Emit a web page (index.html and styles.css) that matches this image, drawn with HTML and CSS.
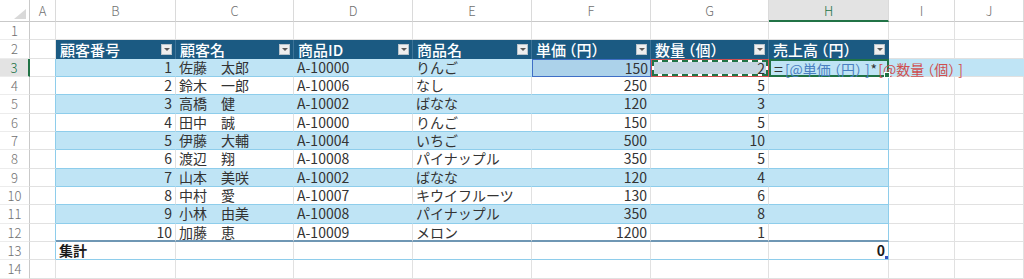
FILE: index.html
```html
<!DOCTYPE html>
<html lang="ja">
<head>
<meta charset="utf-8">
<title>売上表</title>
<link rel="stylesheet" href="styles.css">
</head>
<body>
<div class="sheet">
  <div class="corner"><svg width="12" height="10" viewBox="0 0 12 10"><polygon points="12,0 12,10 0,10" fill="#d9d9d9"/></svg></div>
  <div class="ch">A</div><div class="ch">B</div><div class="ch">C</div><div class="ch">D</div><div class="ch">E</div><div class="ch">F</div><div class="ch">G</div><div class="ch act">H</div><div class="ch">I</div><div class="ch">J</div>

  <div class="rh">1</div>
  <div class="x"></div><div class="x"></div><div class="x"></div><div class="x"></div><div class="x"></div><div class="x"></div><div class="x"></div><div class="x"></div><div class="x"></div><div class="x"></div>

  <div class="rh">2</div>
  <div class="x"></div>
  <div class="hd"><span>顧客番号</span><span class="flt"></span></div>
  <div class="hd"><span>顧客名</span><span class="flt"></span></div>
  <div class="hd"><span>商品ID</span><span class="flt"></span></div>
  <div class="hd"><span>商品名</span><span class="flt"></span></div>
  <div class="hd"><span>単価<span class="pl">（</span>円<span class="pr">）</span></span><span class="flt"></span></div>
  <div class="hd"><span>数量<span class="pl">（</span>個<span class="pr">）</span></span><span class="flt"></span></div>
  <div class="hd hd-last"><span>売上高<span class="pl">（</span>円<span class="pr">）</span></span><span class="flt"></span></div>
  <div class="x"></div><div class="x"></div>

  <div class="rh act">3</div>
  <div class="x ae"></div>
  <div class="x bl n">1</div><div class="x bl">佐藤　太郎</div><div class="x bl">A-10000</div><div class="x bl">りんご</div>
  <div class="x bl n refb">150</div>
  <div class="x bl refr"><div class="ants"><span class="antin">2</span></div></div>
  <div class="x bl last edit"><span class="eq">=</span><span class="fb">[@単価<span class="pl">（</span>円<span class="pr">）</span>]</span><span class="ast">*</span><span class="fr">[@数量<span class="pl">（</span>個<span class="pr">）</span>]</span></div>
  <div class="x ed"></div><div class="x ed"></div>

  <div class="rh">4</div>
  <div class="x ae"></div>
  <div class="x wh n">2</div><div class="x wh">鈴木　一郎</div><div class="x wh">A-10006</div><div class="x wh">なし</div><div class="x wh n">250</div><div class="x wh n">5</div><div class="x wh last"></div>
  <div class="x"></div><div class="x"></div>

  <div class="rh">5</div>
  <div class="x ae"></div>
  <div class="x bl n">3</div><div class="x bl">高橋　健</div><div class="x bl">A-10002</div><div class="x bl">ばなな</div><div class="x bl n">120</div><div class="x bl n">3</div><div class="x bl last"></div>
  <div class="x"></div><div class="x"></div>

  <div class="rh">6</div>
  <div class="x ae"></div>
  <div class="x wh n">4</div><div class="x wh">田中　誠</div><div class="x wh">A-10000</div><div class="x wh">りんご</div><div class="x wh n">150</div><div class="x wh n">5</div><div class="x wh last"></div>
  <div class="x"></div><div class="x"></div>

  <div class="rh">7</div>
  <div class="x ae"></div>
  <div class="x bl n">5</div><div class="x bl">伊藤　大輔</div><div class="x bl">A-10004</div><div class="x bl">いちご</div><div class="x bl n">500</div><div class="x bl n">10</div><div class="x bl last"></div>
  <div class="x"></div><div class="x"></div>

  <div class="rh">8</div>
  <div class="x ae"></div>
  <div class="x wh n">6</div><div class="x wh">渡辺　翔</div><div class="x wh">A-10008</div><div class="x wh">パイナップル</div><div class="x wh n">350</div><div class="x wh n">5</div><div class="x wh last"></div>
  <div class="x"></div><div class="x"></div>

  <div class="rh">9</div>
  <div class="x ae"></div>
  <div class="x bl n">7</div><div class="x bl">山本　美咲</div><div class="x bl">A-10002</div><div class="x bl">ばなな</div><div class="x bl n">120</div><div class="x bl n">4</div><div class="x bl last"></div>
  <div class="x"></div><div class="x"></div>

  <div class="rh">10</div>
  <div class="x ae"></div>
  <div class="x wh n">8</div><div class="x wh">中村　愛</div><div class="x wh">A-10007</div><div class="x wh">キウイフルーツ</div><div class="x wh n">130</div><div class="x wh n">6</div><div class="x wh last"></div>
  <div class="x"></div><div class="x"></div>

  <div class="rh">11</div>
  <div class="x ae"></div>
  <div class="x bl n">9</div><div class="x bl">小林　由美</div><div class="x bl">A-10008</div><div class="x bl">パイナップル</div><div class="x bl n">350</div><div class="x bl n">8</div><div class="x bl last"></div>
  <div class="x"></div><div class="x"></div>

  <div class="rh">12</div>
  <div class="x ae"></div>
  <div class="x wh r12 n">10</div><div class="x wh r12">加藤　恵</div><div class="x wh r12">A-10009</div><div class="x wh r12">メロン</div><div class="x wh r12 n">1200</div><div class="x wh r12 n">1</div><div class="x wh r12 last"></div>
  <div class="x"></div><div class="x"></div>

  <div class="rh">13</div>
  <div class="x ae"></div>
  <div class="x tot">集計</div><div class="x tot"></div><div class="x tot"></div><div class="x tot"></div><div class="x tot"></div><div class="x tot"></div><div class="x tot n last rsz">0</div>
  <div class="x"></div><div class="x"></div>

  <div class="rh">14</div>
  <div class="x"></div><div class="x"></div><div class="x"></div><div class="x"></div><div class="x"></div><div class="x"></div><div class="x"></div><div class="x"></div><div class="x"></div><div class="x"></div>
</div>
</body>
</html>
```
FILE: styles.css
```css
html, body {
  margin: 0;
  padding: 0;
  background: #ffffff;
}

body {
  font-family: "Noto Sans CJK JP", "Noto Sans", sans-serif;
  overflow: hidden;
  text-spacing-trim: space-all;
}

.sheet {
  display: grid;
  grid-template-columns: 30px 26px 120px 118px 119px 119px 119px 118px 120px 66px 69px;
  grid-template-rows: 22px repeat(14, 18.33px);
  width: 1024px;
}

.corner {
  box-sizing: border-box;
  border-right: 1px solid #c9c9c9;
  border-bottom: 1px solid #c9c9c9;
  display: flex;
  align-items: flex-end;
  justify-content: flex-end;
  padding: 0 3px 2px 0;
}

.corner svg {
  display: block;
}

.ch {
  box-sizing: border-box;
  border-right: 1px solid #dadada;
  border-bottom: 1px solid #c9c9c9;
  color: #707070;
  font-size: 13px;
  line-height: 22px;
  text-align: center;
  font-weight: 300;
}

.ch.act {
  background: #e3e3e3;
  color: #217346;
  border-bottom: 2px solid #217346;
}

.rh {
  box-sizing: border-box;
  border-right: 1px solid #c9c9c9;
  border-bottom: 1px solid #ececec;
  color: #707070;
  font-size: 13px;
  line-height: 17px;
  text-align: center;
  font-weight: 300;
}

.rh.act {
  background: #e3e3e3;
  color: #217346;
  border-right: 2px solid #217346;
}

.x {
  box-sizing: border-box;
  border-right: 1px solid #e1e1e1;
  border-bottom: 1px solid #e1e1e1;
  font-size: 14px;
  line-height: 17px;
  padding: 0 3px;
  white-space: nowrap;
  color: #333333;
}

.n {
  text-align: right;
}

.hd {
  box-sizing: border-box;
  background: #1b5a82;
  color: #ffffff;
  font-size: 15px;
  font-weight: 500;
  line-height: 17px;
  display: flex;
  align-items: center;
  justify-content: space-between;
  padding: 0 3px 0 4px;
  border-right: 1px solid #3d7499;
  white-space: nowrap;
}

.hd-last {
  border-right-color: #1b5a82;
}

.pl {
  font-feature-settings: "halt";
  padding-left: 3px;
}

.pr {
  font-feature-settings: "halt";
  padding-right: 3px;
}

.flt {
  width: 11px;
  height: 11px;
  box-sizing: border-box;
  background: #efefef;
  border: 1px solid #b9c4cc;
  display: flex;
  align-items: center;
  justify-content: center;
  flex: none;
}

.flt::after {
  content: "";
  border-left: 3px solid transparent;
  border-right: 3px solid transparent;
  border-top: 3px solid #5a5a5a;
}

.ae {
  border-right-color: #8ecdeb;
}

.bl {
  background: #bfe4f5;
  border-right-color: #bfe4f5;
  border-bottom-color: #8ecdeb;
}

.wh {
  border-bottom-color: #8ecdeb;
}

.last {
  border-right-color: #8ecdeb;
}

.r12 {
  border-bottom: 2px solid #6f97b4;
}

.tot {
  font-weight: bold;
  border-bottom-color: #8ecdeb;
  color: #1a1a1a;
}

.rsz {
  position: relative;
}

.rsz::after {
  content: "";
  position: absolute;
  right: 0;
  bottom: 0;
  width: 3px;
  height: 3px;
  background: #3452c0;
}

.refb {
  background: #acd2ea;
  border: 1px solid #3f6fc6;
  padding-right: 2px;
}

.refr {
  background: #c5d5e1;
  border: 1px solid #d24f4f;
  padding: 0;
}

.ants {
  box-sizing: border-box;
  height: 100%;
  border: 2px dashed #217346;
  background: #ffffff;
}

.antin {
  display: block;
  height: 100%;
  background: #c5d5e1;
  text-align: right;
  line-height: 13px;
  padding-right: 1px;
}

.edit {
  position: relative;
  z-index: 2;
  border: 2px solid #217346;
  padding: 0 2px;
  line-height: 15px;
}

.edit::after {
  content: "";
  position: absolute;
  right: -3px;
  bottom: -3px;
  width: 4px;
  height: 4px;
  background: #217346;
  border: 1px solid #ffffff;
}

.eq {
  font-size: 16px;
  padding: 0 2px 0 1px;
}

.ast {
  padding: 0 1px;
}

.fb {
  color: #4a7fc1;
}

.fr {
  color: #cf4f4f;
}

.ed {
  background: #bfe4f5;
  border-right-color: #bfe4f5;
}
```
